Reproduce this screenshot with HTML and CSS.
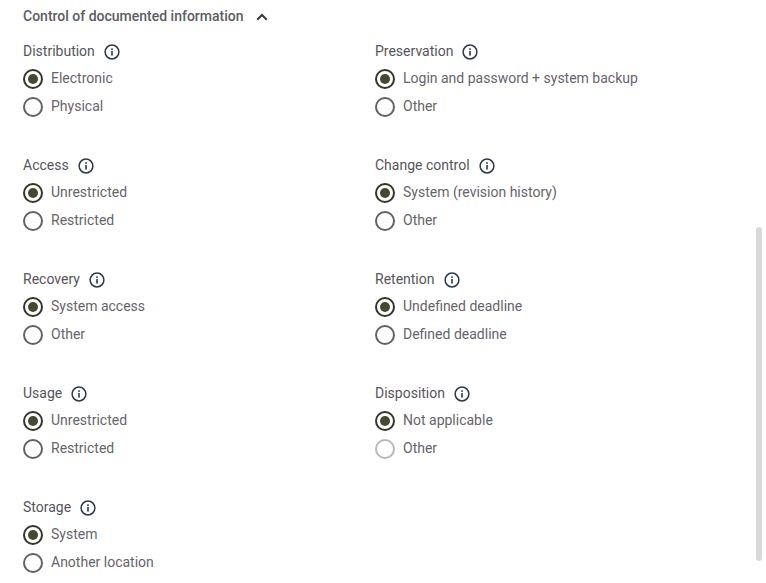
FILE: index.html
```html
<!DOCTYPE html>
<html lang="en">
<head>
<meta charset="utf-8">
<title>Control of documented information</title>
<link rel="stylesheet" href="styles.css">
</head>
<body>
<svg class="defs" width="0" height="0" aria-hidden="true">
  <symbol id="info" viewBox="0 0 16 16">
    <circle cx="8" cy="8" r="6.9" fill="none" stroke="currentColor" stroke-width="1.5"/>
    <rect x="7.2" y="7" width="1.6" height="4.6" fill="currentColor"/>
    <rect x="7.2" y="4.3" width="1.6" height="1.6" fill="currentColor"/>
  </symbol>
</svg>
<main class="panel">
  <header class="head">
    <h2 class="title">Control of documented information</h2>
    <svg class="chevron" viewBox="0 0 12 8" aria-hidden="true"><path d="M1.2 6.8 6 2l4.8 4.8" fill="none" stroke="currentColor" stroke-width="2"/></svg>
  </header>
  <div class="grid">
    <section class="group">
      <div class="label">Distribution <svg class="info"><use href="#info"/></svg></div>
      <div class="opt"><span class="radio on"></span>Electronic</div>
      <div class="opt"><span class="radio"></span>Physical</div>
    </section>
    <section class="group">
      <div class="label">Preservation <svg class="info"><use href="#info"/></svg></div>
      <div class="opt"><span class="radio on"></span>Login and password + system backup</div>
      <div class="opt"><span class="radio"></span>Other</div>
    </section>
    <section class="group">
      <div class="label">Access <svg class="info"><use href="#info"/></svg></div>
      <div class="opt"><span class="radio on"></span>Unrestricted</div>
      <div class="opt"><span class="radio"></span>Restricted</div>
    </section>
    <section class="group">
      <div class="label">Change control <svg class="info"><use href="#info"/></svg></div>
      <div class="opt"><span class="radio on"></span>System (revision history)</div>
      <div class="opt"><span class="radio"></span>Other</div>
    </section>
    <section class="group">
      <div class="label">Recovery <svg class="info"><use href="#info"/></svg></div>
      <div class="opt"><span class="radio on"></span>System access</div>
      <div class="opt"><span class="radio"></span>Other</div>
    </section>
    <section class="group">
      <div class="label">Retention <svg class="info"><use href="#info"/></svg></div>
      <div class="opt"><span class="radio on"></span>Undefined deadline</div>
      <div class="opt"><span class="radio"></span>Defined deadline</div>
    </section>
    <section class="group">
      <div class="label">Usage <svg class="info"><use href="#info"/></svg></div>
      <div class="opt"><span class="radio on"></span>Unrestricted</div>
      <div class="opt"><span class="radio"></span>Restricted</div>
    </section>
    <section class="group">
      <div class="label">Disposition <svg class="info"><use href="#info"/></svg></div>
      <div class="opt"><span class="radio on"></span>Not applicable</div>
      <div class="opt"><span class="radio disabled"></span>Other</div>
    </section>
    <section class="group">
      <div class="label">Storage <svg class="info"><use href="#info"/></svg></div>
      <div class="opt"><span class="radio on"></span>System</div>
      <div class="opt"><span class="radio"></span>Another location</div>
    </section>
  </div>
</main>
<div class="scrollbar"></div>
</body>
</html>
```
FILE: styles.css
```css
* { box-sizing: border-box; }
html, body { margin: 0; height: 100%; background: #fff; overflow: hidden; }
body { font-family: Roboto, "Liberation Sans", sans-serif; font-size: 14px; color: #66646a; position: relative; }
.defs { position: absolute; }
.panel { padding: 6px 0 0 23px; }
.head { display: flex; align-items: center; height: 20px; gap: 12px; margin-bottom: 5px; color: #3a3b40; }
.title { margin: 0; font-size: 14px; font-weight: 500; line-height: 20px; color: #5c5c62; }
.chevron { width: 12px; height: 8px; margin-top: 2px; }
.grid { display: grid; grid-template-columns: 352px 352px; }
.group { height: 114px; padding-top: 10px; }
.label { display: flex; align-items: center; gap: 9px; height: 20px; line-height: 20px; color: #55555b; }
.info { width: 16px; height: 16px; margin-top: 2px; color: #2f3a45; }
.opt { display: flex; align-items: center; gap: 8px; height: 28px; line-height: 20px; }
.label + .opt { margin-top: 3px; }
.radio { width: 20px; height: 20px; margin-top: 2px; border: 2px solid #626262; border-radius: 50%; flex: none; display: flex; align-items: center; justify-content: center; }
.radio.on { border-color: #33362a; }
.radio.on::after { content: ""; width: 10px; height: 10px; border-radius: 50%; background: #45492f; }
.radio.disabled { border-color: #b8b8b8; }
.scrollbar { position: absolute; left: 756px; top: 227px; width: 6px; height: 334px; border-radius: 3px; background: #d9d9d9; }
```
